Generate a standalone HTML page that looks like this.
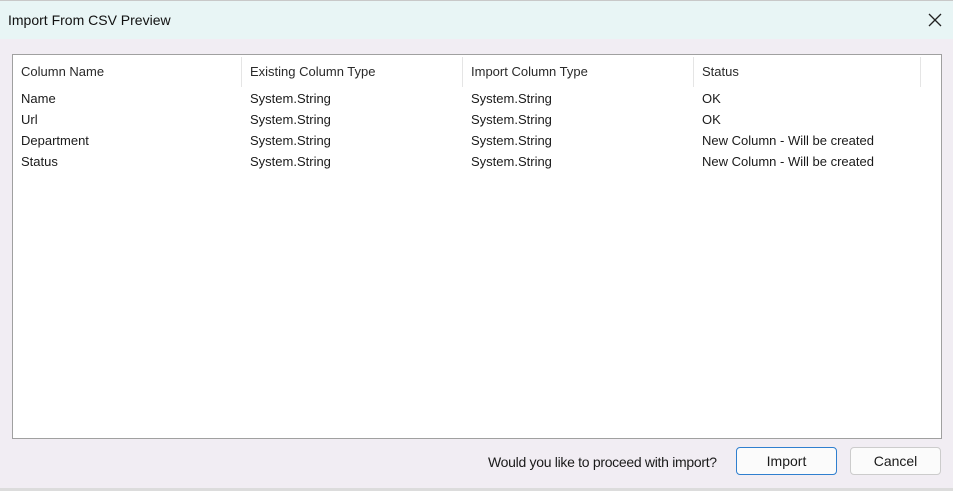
<!DOCTYPE html>
<html><head><style>
html,body{margin:0;padding:0;width:953px;height:491px;overflow:hidden;background:#f1edf3;font-family:"Liberation Sans",sans-serif;font-size:13px;color:#1a1a1a}
.title{position:absolute;left:0;top:0;width:953px;height:38px;background:#e8f5f5;border-top:1px solid #c8c8c8}
.title span{position:absolute;left:8px;top:11px;font-size:14px;color:#111}
.close{position:absolute;left:928px;top:12px}
.list{position:absolute;left:12px;top:54px;width:928px;height:383px;background:#fff;border:1px solid #a0a0a0}
.h{position:absolute;top:9px;color:#2a2a2a}
.div{position:absolute;top:2px;width:1px;height:30px;background:#e5e5e5}
.c{position:absolute;white-space:nowrap}
.btn{position:absolute;top:447px;height:26px;border:1px solid #ccc;border-radius:4px;background:#fbfbfb;text-align:center;line-height:26px;font-size:14px}
.bottom{position:absolute;left:0;top:488px;width:953px;height:3px;background:#dcdcdc}
</style></head><body>
<div class="title"><span>Import From CSV Preview</span>
<svg class="close" width="14" height="14" viewBox="0 0 14 14"><path d="M1 1L13 13M13 1L1 13" stroke="#222" stroke-width="1.3"/></svg></div>
<div class="list">
<div class="h" style="left:8px">Column Name</div>
<div class="div" style="left:228px"></div>
<div class="h" style="left:237px">Existing Column Type</div>
<div class="div" style="left:449px"></div>
<div class="h" style="left:458px">Import Column Type</div>
<div class="div" style="left:680px"></div>
<div class="h" style="left:689px">Status</div>
<div class="div" style="left:907px"></div>
<div class="c" style="left:8px;top:36px">Name</div><div class="c" style="left:237px;top:36px">System.String</div><div class="c" style="left:458px;top:36px">System.String</div><div class="c" style="left:689px;top:36px">OK</div>
<div class="c" style="left:8px;top:57px">Url</div><div class="c" style="left:237px;top:57px">System.String</div><div class="c" style="left:458px;top:57px">System.String</div><div class="c" style="left:689px;top:57px">OK</div>
<div class="c" style="left:8px;top:78px">Department</div><div class="c" style="left:237px;top:78px">System.String</div><div class="c" style="left:458px;top:78px">System.String</div><div class="c" style="left:689px;top:78px">New Column - Will be created</div>
<div class="c" style="left:8px;top:99px">Status</div><div class="c" style="left:237px;top:99px">System.String</div><div class="c" style="left:458px;top:99px">System.String</div><div class="c" style="left:689px;top:99px">New Column - Will be created</div>
</div>
<div class="c" style="left:488px;top:454px;font-size:14px;letter-spacing:-0.3px">Would you like to proceed with import?</div>
<div class="btn" style="left:736px;width:99px;border:1px solid #2f7fcf">Import</div>
<div class="btn" style="left:850px;width:89px">Cancel</div>
<div class="bottom"></div>
</body></html>
